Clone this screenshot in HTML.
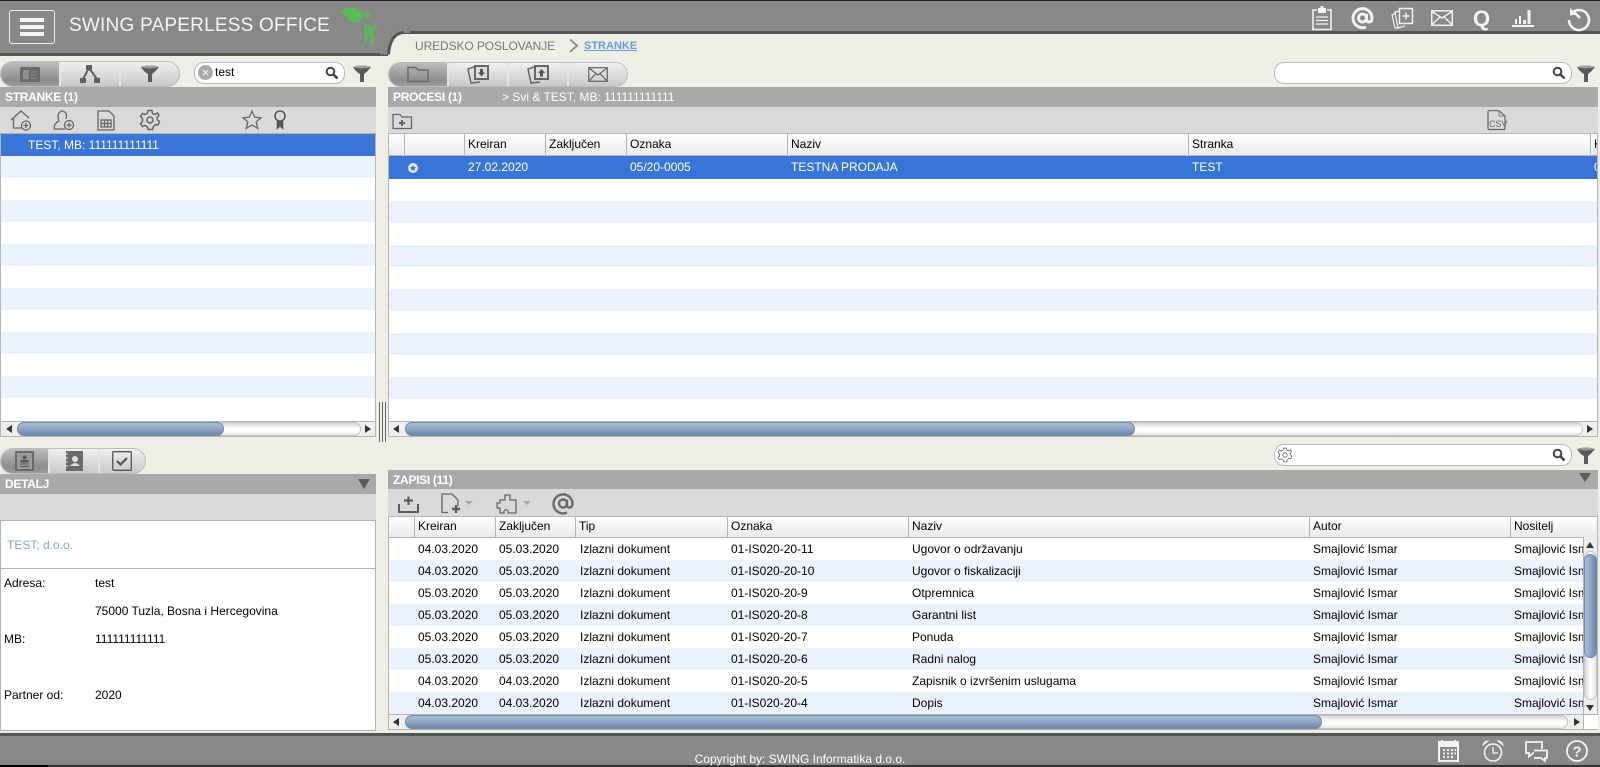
<!DOCTYPE html>
<html><head><meta charset="utf-8"><title>Swing Paperless Office</title>
<style>
*{box-sizing:border-box}
html,body{margin:0;padding:0;width:1600px;height:767px;overflow:hidden;background:#eeeee6;font:12px "Liberation Sans",Arial,sans-serif;color:#000}
.a{position:absolute}
svg{position:absolute;display:block;overflow:visible}
.ph{position:absolute;background:#a9a9a9;color:#fff;font-weight:bold;font-size:12px;line-height:20px;padding-left:5px;letter-spacing:-.3px}
.tb{position:absolute;background:#d9d9d9}
.box{position:absolute;background:#fff;border:1px solid #b4b4b4;overflow:hidden}
.r{position:absolute;left:0;right:0;height:22px;line-height:22px;white-space:nowrap}
.s{background:#3875d7;color:#fff}
.b{background:#ebf2fc}
.c{position:absolute;top:0;white-space:nowrap}
.hd{position:absolute;left:0;right:0;background:linear-gradient(#fff,#e9e9e9);border-bottom:1px solid #b4b4b4}
.h{position:absolute;top:0;bottom:0;border-right:1px solid #b4b4b4;padding-left:3px;line-height:21px;white-space:nowrap;overflow:hidden}
.tabs{position:absolute;height:25px;border:1px solid #bdbdbd;border-radius:13px;overflow:hidden;background:linear-gradient(#f0f0f0,#c8c8c8)}
.tab{position:absolute;top:0;bottom:0;border-right:2px solid #e4e4e4}
.tab.on{background:linear-gradient(#bcbcbc,#8c8c8c 75%,#9c9c9c)}
.sr{position:absolute;background:#fff;border:1px solid #b9b9b9;border-radius:10px;height:22px}
.hsb{position:absolute;height:16px;background:#eee;border:1px solid #b4b4b4}
.trk{position:absolute;top:0;height:14px;border-radius:7px;border:1px solid #c4c4c4;border-left:0;background:linear-gradient(#d4d4d4,#fff 45%,#fff 70%,#e4e4e4)}
.thm{position:absolute;top:0;height:14px;border-radius:7px;background:linear-gradient(#a9bcd4,#8ea5c4 50%,#6d86a9);border:1px solid #7489a8}
.la,.ra{position:absolute;top:3px;width:0;height:0;border-top:4px solid transparent;border-bottom:4px solid transparent}
.la{border-right:6px solid #333}.ra{border-left:6px solid #333}
</style></head><body>

<!-- top header -->
<div class="a" style="left:0;top:0;width:1600px;height:1px;background:#222"></div>
<div class="a" style="left:0;top:1px;width:1600px;height:30px;background:#888"></div>
<div class="a" style="left:0;top:31px;width:1600px;height:3px;background:#555"></div>
<div class="a" style="left:0;top:31px;width:388px;height:22px;background:#888"></div>
<div class="a" style="left:0;top:53px;width:388px;height:3px;background:#555"></div>
<svg style="left:380px;top:28px" width="30" height="30"><path d="M0 0H30V5H24Q11 5 9.500 26.500H0Z" fill="#888"/><path d="M24 4.500Q10 5 8.500 26.500" fill="none" stroke="#555" stroke-width="3"/></svg>

<div class="a" style="left:9px;top:10px;width:46px;height:34px;border:1px solid #f2f2f2;border-radius:3px"></div>
<div class="a" style="left:20px;top:18px;width:24px;height:4px;background:#f5f5f5"></div>
<div class="a" style="left:20px;top:25px;width:24px;height:4px;background:#f5f5f5"></div>
<div class="a" style="left:20px;top:32px;width:24px;height:4px;background:#f5f5f5"></div>
<div class="a" style="left:69px;top:14px;font-size:19px;letter-spacing:.22px;line-height:24px;color:#f4f4f4;white-space:nowrap">SWING PAPERLESS OFFICE</div>
<svg style="left:330px;top:0" width="70" height="60" viewBox="0 0 210 180" fill="#5cb85c"><path d="M33 32C55 15 85 22 103 42C100 60 85 70 70 68C50 62 42 45 33 32Z"/><circle cx="113" cy="45" r="9"/><path d="M98 62C108 75 118 80 125 80L148 73C140 82 132 88 128 92C134 110 136 128 124 141C124 125 120 112 114 102C112 120 106 135 95 146C105 125 110 95 98 62Z"/></svg>

<!-- top right icons -->
<svg style="left:1310px;top:6px" width="24" height="25" fill="none" stroke="#f2f2f2"><path d="M7 4H3V23.500H21V4H17" stroke-width="1.600"/><rect x="8" y="2" width="8" height="5" fill="#f2f2f2" stroke="none"/><rect x="10.500" y="0" width="3" height="3" fill="#f2f2f2" stroke="none"/><path d="M6 11H18M6 14.500H18M6 18H18" stroke-width="1.200"/></svg>
<svg style="left:1351px;top:7px" width="23" height="23" fill="none" stroke="#f2f2f2" stroke-width="3"><circle cx="11.500" cy="11" r="4"/><path d="M15.500 7V12.500Q15.500 15 18 15Q21 15 21 11A9.500 9.500 0 1 0 15 20"/></svg>
<svg style="left:1390px;top:7px" width="24" height="23" fill="none" stroke="#f2f2f2"><rect x="9.500" y="1.500" width="13" height="15" stroke-width="1.500"/><path d="M16 5.500V12.500M12.500 9H19.500" stroke-width="1.500"/><path d="M9 4L5 5L8 21L15 19M6 6L2 8L5 21L8 21" stroke-width="1.200"/></svg>
<svg style="left:1431px;top:10px" width="22" height="16" fill="none" stroke="#f2f2f2" stroke-width="1.500"><rect x=".8" y=".8" width="20.500" height="14.500"/><path d="M1 1.500L11 8L21 1.500M1 14.500L9 7M21 14.500L13 7"/></svg>
<div class="a" style="left:1473px;top:6px;font-size:22px;font-weight:bold;line-height:25px;color:#f4f4f4">Q</div>
<svg style="left:1512px;top:9px" width="22" height="19" fill="#f2f2f2"><rect x="0" y="16" width="22" height="2"/><rect x="3" y="10" width="2" height="5"/><rect x="7" y="7" width="2" height="8"/><rect x="11" y="11" width="3" height="4"/><rect x="15.500" y="1" width="3" height="14"/></svg>
<svg style="left:1567px;top:7px" width="24" height="24" fill="none" stroke="#f2f2f2" stroke-width="2.600"><path d="M4 7A10 10 0 1 1 2 13"/><path d="M3 1L3 8.500L10 7.500" stroke-width="0" fill="#f2f2f2"/><path d="M6 4L13 11"/></svg>

<!-- breadcrumb -->
<div class="a" style="left:415px;top:39px;line-height:15px;color:#777;letter-spacing:-.1px;white-space:nowrap">UREDSKO POSLOVANJE</div>
<svg style="left:568px;top:38px" width="12" height="16" fill="none" stroke="#8a8a8a" stroke-width="1.800"><path d="M2 1.500L9 7.500L2 14"/></svg>
<div class="a" style="left:584px;top:39px;line-height:15px;font-size:11px;color:#6c9ad8;font-weight:bold;text-decoration:underline;white-space:nowrap">STRANKE</div>

<!-- left tabs -->
<div class="tabs" style="left:0;top:61px;width:180px;height:26px">
 <div class="tab on" style="left:0;width:60px"></div><div class="tab" style="left:60px;width:60px"></div>
</div>
<svg style="left:20px;top:67px" width="20" height="15"><rect width="20" height="15" rx="2" fill="#6a6a6a"/><rect x="3" y="3" width="6" height="9" fill="#8e8e8e"/><path d="M11 5H17M11 8H17M11 11H17" stroke="#8e8e8e"/></svg>
<svg style="left:80px;top:65px" width="20" height="19" fill="#5f5f5f"><rect x="6" y="0" width="6" height="5"/><rect x="0" y="13" width="6" height="5"/><rect x="14" y="13" width="6" height="5"/><path d="M9 3L3 14M9 3L17 14" stroke="#5f5f5f" stroke-width="2" fill="none"/></svg>
<svg style="left:141px;top:65px" width="18" height="18" fill="#5a5a5a"><path d="M0 2Q9 -1 18 2Q14 7 11 9V17H7V9Q3 7 0 2Z"/><path d="M0 2Q9 -1 18 2Q9 5 0 2Z" fill="#a0a0a0"/></svg>

<div class="sr" style="left:194px;top:62px;width:151px"></div>
<div class="a" style="left:198px;top:65px;width:15px;height:15px;border-radius:50%;background:#aaa;color:#fff;text-align:center;font-size:13px;line-height:15px">×</div>
<div class="a" style="left:215px;top:65px;font-size:12px;line-height:15px">test</div>
<svg style="left:325px;top:66px" width="14" height="14" fill="none" stroke="#444"><circle cx="5.500" cy="5.500" r="3.800" stroke-width="2"/><path d="M8.500 8.500L12.500 12.500" stroke-width="2.600"/></svg>
<svg style="left:353px;top:65px" width="18" height="18" fill="#5a5a5a"><path d="M0 2Q9 -1 18 2Q14 7 11 9V17H7V9Q3 7 0 2Z"/><path d="M0 2Q9 -1 18 2Q9 5 0 2Z" fill="#a0a0a0"/></svg>

<!-- stranke -->
<div class="ph" style="left:0;top:87px;width:376px">STRANKE (1)</div>
<div class="tb" style="left:0;top:107px;width:376px;height:26px"></div>
<svg style="left:10px;top:110px" width="22" height="21" fill="none" stroke="#666" stroke-width="1.300"><path d="M1 10L11 1L19 8M3.500 8.500V18H12"/><circle cx="16" cy="15.500" r="4.500"/><path d="M13.500 15.500H18.500M16 13V18"/></svg>
<svg style="left:53px;top:110px" width="22" height="21" fill="none" stroke="#666" stroke-width="1.300"><path d="M1 19Q1 13 6 11Q3 3 9 1Q15 2 13 9"/><path d="M1 19H12"/><circle cx="16" cy="15" r="4.500"/><path d="M13.500 15H18.500M16 12.500V17.500"/></svg>
<svg style="left:97px;top:110px" width="18" height="21" fill="none" stroke="#666" stroke-width="1.300"><path d="M1 1H12L17 6V20H1Z"/><rect x="4" y="10" width="10" height="7"/><path d="M7.500 10V17M10.500 10V17M4 13.500H14"/></svg>
<svg style="left:139px;top:109px" width="22" height="22" fill="none" stroke="#666" stroke-width="1.500"><circle cx="11" cy="11" r="3"/><path d="M9 1.500H13L13.500 4.500L16 5.500L18.500 3.800L20 6.500L18 8.500L18.500 11L20.500 12.500L19 16L16.500 15.500L14.500 17.500L13.500 20.500H9L8.500 18L6 16.500L3.500 17.500L1.500 14.500L3.500 12.500V9.500L1.500 7.500L3.500 4.500L6 5.500L8.500 4Z"/></svg>
<svg style="left:242px;top:110px" width="20" height="19" fill="none" stroke="#666" stroke-width="1.300"><path d="M10 1L12.700 7.200L19 7.800L14.200 12L15.700 18.300L10 15L4.300 18.300L5.800 12L1 7.800L7.300 7.200Z"/></svg>
<svg style="left:273px;top:110px" width="14" height="19" fill="none" stroke="#555" stroke-width="1.600"><circle cx="7" cy="6" r="5"/><path d="M4.500 11V18L7 15.500L9.500 18V11" fill="#555"/></svg>

<div class="box" style="left:0;top:133px;width:376px;height:304px">
 <div class="r s" style="top:0;padding-left:27px">TEST, MB: 111111111111</div>
 <div class="r b" style="top:22px"></div><div class="r b" style="top:66px"></div><div class="r b" style="top:110px"></div><div class="r b" style="top:154px"></div><div class="r b" style="top:198px"></div><div class="r b" style="top:242px"></div>
</div>
<div class="hsb" style="left:0;top:421px;width:376px">
 <div class="la" style="left:5px"></div><div class="trk" style="left:17px;width:343px"></div><div class="thm" style="left:16px;width:207px"></div><div class="ra" style="left:364px"></div>
</div>

<!-- splitter -->
<div class="a" style="left:379px;top:402px;width:1px;height:40px;background:#666"></div>
<div class="a" style="left:382px;top:402px;width:1px;height:40px;background:#666"></div>
<div class="a" style="left:385px;top:402px;width:1px;height:40px;background:#666"></div>

<!-- right top tabs -->
<div class="tabs" style="left:388px;top:62px;width:240px">
 <div class="tab on" style="left:0;width:60px"></div><div class="tab" style="left:60px;width:60px"></div><div class="tab" style="left:120px;width:60px"></div>
</div>
<svg style="left:407px;top:66px" width="22" height="17" fill="none" stroke="#6a6a6a" stroke-width="1.500"><path d="M1 15.500V1.500H9L11 4H21V15.500Z"/></svg>
<svg style="left:467px;top:65px" width="24" height="19"><path d="M7 2L1 4L4 18L13 17" fill="none" stroke="#666" stroke-width="1.500"/><rect x="7" y="0" width="15" height="15" fill="#666"/><rect x="9" y="2" width="11" height="11" fill="#ddd"/><path d="M13 4H16V7.500H18L14.500 11.500L11 7.500H13Z" fill="#555"/></svg>
<svg style="left:527px;top:65px" width="24" height="19"><path d="M7 2L1 4L4 18L13 17" fill="none" stroke="#666" stroke-width="1.500"/><rect x="7" y="0" width="15" height="15" fill="#666"/><rect x="9" y="2" width="11" height="11" fill="#ddd"/><path d="M13 11.500H16V8H18L14.500 4L11 8H13Z" fill="#555"/></svg>
<svg style="left:588px;top:67px" width="20" height="15" fill="none" stroke="#6a6a6a" stroke-width="1.300"><rect x=".7" y=".7" width="18.600" height="13.600"/><path d="M1 1L10 8L19 1M1 14L8 6.500M19 14L12 6.500"/></svg>

<div class="sr" style="left:1274px;top:62px;width:298px"></div>
<svg style="left:1552px;top:66px" width="14" height="14" fill="none" stroke="#444"><circle cx="5.500" cy="5.500" r="3.800" stroke-width="2"/><path d="M8.500 8.500L12.500 12.500" stroke-width="2.600"/></svg>
<svg style="left:1577px;top:65px" width="18" height="18" fill="#5a5a5a"><path d="M0 2Q9 -1 18 2Q14 7 11 9V17H7V9Q3 7 0 2Z"/><path d="M0 2Q9 -1 18 2Q9 5 0 2Z" fill="#a0a0a0"/></svg>

<!-- procesi -->
<div class="ph" style="left:388px;top:87px;width:1210px">PROCESI (1)</div>
<div class="a" style="left:502px;top:87px;line-height:20px;color:#fff;white-space:nowrap">&gt; Svi &amp; TEST, MB: 111111111111</div>
<div class="tb" style="left:388px;top:107px;width:1210px;height:26px"></div>
<svg style="left:392px;top:113px" width="21" height="17" fill="none" stroke="#666" stroke-width="1.300"><path d="M1 15.500V1.500H8L10 4H19.500V15.500Z"/><path d="M10 7V13M7 10H13" stroke-width="2"/></svg>
<svg style="left:1487px;top:110px" width="20" height="21" fill="none" stroke="#666" stroke-width="1.200"><path d="M2 19.500Q1 19.500 1 18V2Q1 .7 2 .7H12L18 6V18Q18 19.500 17 19.500Z"/><path d="M12 1V6H18" stroke-width=".8"/><text x="2" y="17" font-family="Liberation Sans" font-size="9" fill="#666" stroke="none">CSV</text></svg>

<div class="box" style="left:388px;top:133px;width:1210px;height:288px;border-bottom:0">
 <div class="hd" style="top:0;height:22px">
  <div class="h" style="left:0;width:16px"></div><div class="h" style="left:16px;width:60px"></div>
  <div class="h" style="left:76px;width:81px">Kreiran</div><div class="h" style="left:157px;width:81px">Zaključen</div><div class="h" style="left:238px;width:161px">Oznaka</div><div class="h" style="left:399px;width:401px">Naziv</div><div class="h" style="left:800px;width:402px">Stranka</div><div class="h" style="left:1202px;width:7px;border:0">K</div>
 </div>
 <div class="r s" style="top:22px;height:23px"><svg style="left:19px;top:7px" width="10" height="10"><circle cx="5" cy="5" r="5" fill="#dfe8f7"/><path d="M5 2L5.900 4.100L8 4.300L6.400 5.700L6.900 7.800L5 6.700L3.100 7.800L3.600 5.700L2 4.300L4.100 4.100Z" fill="#3875d7"/></svg>
  <div class="c" style="left:79px">27.02.2020</div><div class="c" style="left:241px">05/20-0005</div><div class="c" style="left:402px">TESTNA PRODAJA</div><div class="c" style="left:803px">TEST</div><div class="c" style="left:1205px">0</div></div>
 <div class="r b" style="top:67px"></div><div class="r b" style="top:111px"></div><div class="r b" style="top:155px"></div><div class="r b" style="top:199px"></div><div class="r b" style="top:243px"></div>
</div>
<div class="hsb" style="left:388px;top:421px;width:1210px">
 <div class="la" style="left:4px"></div><div class="trk" style="left:17px;width:1177px"></div><div class="thm" style="left:16px;width:730px"></div><div class="ra" style="left:1198px"></div>
</div>

<!-- detail tabs -->
<div class="tabs" style="left:0;top:448px;width:146px;height:26px">
 <div class="tab on" style="left:0;width:49px"></div><div class="tab" style="left:49px;width:50px"></div>
</div>
<svg style="left:15px;top:451px" width="19" height="20"><rect width="19" height="20" rx="1" fill="#6a6a6a"/><rect x="2" y="2" width="15" height="16" fill="#9a9a9a"/><circle cx="9.500" cy="6.500" r="2" fill="#555"/><path d="M6 11V9.500H13V11ZM5 13H14M5 15.500H14" fill="#555" stroke="#555"/></svg>
<svg style="left:65px;top:451px" width="18" height="20"><rect x="1" y="0" width="17" height="20" fill="#6a6a6a"/><path d="M0 3H3M0 7H3M0 11H3M0 15H3" stroke="#ddd"/><circle cx="10" cy="8" r="3" fill="#ddd"/><path d="M5 15Q10 9 15 15Z" fill="#ddd"/></svg>
<svg style="left:112px;top:451px" width="20" height="20" fill="none" stroke="#555"><rect x=".7" y=".7" width="18.600" height="18.600" rx="1" stroke-width="1.300"/><path d="M5 10L8.500 13.500L15 7" stroke-width="2.200"/></svg>

<!-- detalj -->
<div class="ph" style="left:0;top:474px;width:376px">DETALJ</div>
<div class="a" style="left:358px;top:479px;width:0;height:0;border-left:6.500px solid transparent;border-right:6.500px solid transparent;border-top:10px solid #5c5c5c"></div>
<div class="tb" style="left:0;top:494px;width:376px;height:26px"></div>
<div class="box" style="left:0;top:520px;width:376px;height:211px"></div>
<div class="a" style="left:1px;top:568px;width:374px;height:1px;background:#b4b4b4"></div>
<div class="a" style="left:7px;top:537px;line-height:16px;color:#8aa2c8">TEST; d.o.o.</div>
<div class="a" style="left:4px;top:575px;line-height:16px">Adresa:</div><div class="a" style="left:95px;top:575px;line-height:16px">test</div>
<div class="a" style="left:95px;top:603px;line-height:16px;white-space:nowrap">75000 Tuzla, Bosna i Hercegovina</div>
<div class="a" style="left:4px;top:631px;line-height:16px">MB:</div><div class="a" style="left:95px;top:631px;line-height:16px">111111111111</div>
<div class="a" style="left:4px;top:687px;line-height:16px">Partner od:</div><div class="a" style="left:95px;top:687px;line-height:16px">2020</div>

<!-- zapisi search -->
<div class="sr" style="left:1274px;top:444px;width:298px"></div>
<svg style="left:1277px;top:447px" width="16" height="16" fill="none" stroke="#666" stroke-width="1.100" viewBox="0 0 22 22"><circle cx="11" cy="11" r="3"/><path d="M9 1.500H13L13.500 4.500L16 5.500L18.500 3.800L20 6.500L18 8.500L18.500 11L20.500 12.500L19 16L16.500 15.500L14.500 17.500L13.500 20.500H9L8.500 18L6 16.500L3.500 17.500L1.500 14.500L3.500 12.500V9.500L1.500 7.500L3.500 4.500L6 5.500L8.500 4Z"/></svg>
<svg style="left:1552px;top:448px" width="14" height="14" fill="none" stroke="#444"><circle cx="5.500" cy="5.500" r="3.800" stroke-width="2"/><path d="M8.500 8.500L12.500 12.500" stroke-width="2.600"/></svg>
<svg style="left:1577px;top:447px" width="18" height="18" fill="#5a5a5a"><path d="M0 2Q9 -1 18 2Q14 7 11 9V17H7V9Q3 7 0 2Z"/><path d="M0 2Q9 -1 18 2Q9 5 0 2Z" fill="#a0a0a0"/></svg>

<!-- zapisi -->
<div class="ph" style="left:388px;top:470px;width:1210px;height:19px;line-height:21px;padding-left:5px;overflow:hidden">ZAPISI (11)</div>
<div class="a" style="left:1579px;top:473px;width:0;height:0;border-left:6px solid transparent;border-right:6px solid transparent;border-top:9px solid #5c5c5c"></div>
<div class="tb" style="left:388px;top:489px;width:1210px;height:27px"></div>
<svg style="left:398px;top:495px" width="21" height="19" fill="none" stroke="#5c5c5c" stroke-width="2"><path d="M1 9V17H20V9"/><path d="M10.500 1.500V10M6 5.500H15" stroke-width="2.200"/></svg>
<svg style="left:441px;top:493px" width="32" height="21"><path d="M7 19.500H1V1H11L17 7V13" fill="none" stroke="#666" stroke-width="1.300"/><path d="M15 12V20M11 16H19" stroke="#5c5c5c" stroke-width="2.400"/><path d="M24 8H32L28 12Z" fill="#aaa"/></svg>
<svg style="left:496px;top:493px" width="36" height="21" fill="none"><path d="M9 2H14V7H20V20H12V18Q10 15 8 18V20H4V15H1V10H4V7H9Z" stroke="#666" stroke-width="1.300"/><path d="M27 8H35L31 12Z" fill="#aaa"/></svg>
<svg style="left:552px;top:493px" width="22" height="22" fill="none" stroke="#6a6a6a" stroke-width="2.400"><circle cx="11" cy="10.500" r="4"/><path d="M15 6.500V12Q15 14.500 17.500 14.500Q20.500 14.500 20.500 10.500A9.500 9.500 0 1 0 15 19.500"/></svg>

<div class="box" style="left:388px;top:516px;width:1210px;height:199px;border-bottom:0">
 <div class="hd" style="top:0;height:21px">
  <div class="h" style="left:0;width:26px"></div>
  <div class="h" style="left:26px;width:81px;line-height:19px">Kreiran</div><div class="h" style="left:107px;width:80px;line-height:19px">Zaključen</div><div class="h" style="left:187px;width:152px;line-height:19px">Tip</div><div class="h" style="left:339px;width:181px;line-height:19px">Oznaka</div><div class="h" style="left:520px;width:401px;line-height:19px">Naziv</div><div class="h" style="left:921px;width:201px;line-height:19px">Autor</div><div class="h" style="left:1122px;width:87px;border:0;line-height:19px">Nositelj</div>
 </div>
 <div class="r" style="top:21px"><div class="c" style="left:29px">04.03.2020</div><div class="c" style="left:110px">05.03.2020</div><div class="c" style="left:191px">Izlazni dokument</div><div class="c" style="left:342px">01-IS020-20-11</div><div class="c" style="left:523px">Ugovor o održavanju</div><div class="c" style="left:924px">Smajlović Ismar</div><div class="c" style="left:1125px;width:69px;overflow:hidden">Smajlović Ismar</div></div>
 <div class="r b" style="top:43px"><div class="c" style="left:29px">04.03.2020</div><div class="c" style="left:110px">05.03.2020</div><div class="c" style="left:191px">Izlazni dokument</div><div class="c" style="left:342px">01-IS020-20-10</div><div class="c" style="left:523px">Ugovor o fiskalizaciji</div><div class="c" style="left:924px">Smajlović Ismar</div><div class="c" style="left:1125px;width:69px;overflow:hidden">Smajlović Ismar</div></div>
 <div class="r" style="top:65px"><div class="c" style="left:29px">05.03.2020</div><div class="c" style="left:110px">05.03.2020</div><div class="c" style="left:191px">Izlazni dokument</div><div class="c" style="left:342px">01-IS020-20-9</div><div class="c" style="left:523px">Otpremnica</div><div class="c" style="left:924px">Smajlović Ismar</div><div class="c" style="left:1125px;width:69px;overflow:hidden">Smajlović Ismar</div></div>
 <div class="r b" style="top:87px"><div class="c" style="left:29px">05.03.2020</div><div class="c" style="left:110px">05.03.2020</div><div class="c" style="left:191px">Izlazni dokument</div><div class="c" style="left:342px">01-IS020-20-8</div><div class="c" style="left:523px">Garantni list</div><div class="c" style="left:924px">Smajlović Ismar</div><div class="c" style="left:1125px;width:69px;overflow:hidden">Smajlović Ismar</div></div>
 <div class="r" style="top:109px"><div class="c" style="left:29px">05.03.2020</div><div class="c" style="left:110px">05.03.2020</div><div class="c" style="left:191px">Izlazni dokument</div><div class="c" style="left:342px">01-IS020-20-7</div><div class="c" style="left:523px">Ponuda</div><div class="c" style="left:924px">Smajlović Ismar</div><div class="c" style="left:1125px;width:69px;overflow:hidden">Smajlović Ismar</div></div>
 <div class="r b" style="top:131px"><div class="c" style="left:29px">05.03.2020</div><div class="c" style="left:110px">05.03.2020</div><div class="c" style="left:191px">Izlazni dokument</div><div class="c" style="left:342px">01-IS020-20-6</div><div class="c" style="left:523px">Radni nalog</div><div class="c" style="left:924px">Smajlović Ismar</div><div class="c" style="left:1125px;width:69px;overflow:hidden">Smajlović Ismar</div></div>
 <div class="r" style="top:153px"><div class="c" style="left:29px">04.03.2020</div><div class="c" style="left:110px">04.03.2020</div><div class="c" style="left:191px">Izlazni dokument</div><div class="c" style="left:342px">01-IS020-20-5</div><div class="c" style="left:523px">Zapisnik o izvršenim uslugama</div><div class="c" style="left:924px">Smajlović Ismar</div><div class="c" style="left:1125px;width:69px;overflow:hidden">Smajlović Ismar</div></div>
 <div class="r b" style="top:175px"><div class="c" style="left:29px">04.03.2020</div><div class="c" style="left:110px">04.03.2020</div><div class="c" style="left:191px">Izlazni dokument</div><div class="c" style="left:342px">01-IS020-20-4</div><div class="c" style="left:523px">Dopis</div><div class="c" style="left:924px">Smajlović Ismar</div><div class="c" style="left:1125px;width:69px;overflow:hidden">Smajlović Ismar</div></div>
</div>
<!-- v scrollbar -->
<div class="a" style="left:1583px;top:537px;width:15px;height:178px;background:#eee;border:1px solid #b4b4b4;border-top:0;border-right:1px solid #b4b4b4"></div>
<div class="a" style="left:1584px;top:551px;width:13px;height:149px;border-radius:7px;background:linear-gradient(90deg,#d8d8d8,#fff 50%,#e4e4e4);border:1px solid #c4c4c4"></div>
<div class="a" style="left:1584px;top:554px;width:13px;height:104px;border-radius:7px;background:linear-gradient(90deg,#a9bcd4,#8ea5c4 50%,#6d86a9);border:1px solid #7489a8"></div>
<div class="a" style="left:1586px;top:542px;width:0;height:0;border-left:4px solid transparent;border-right:4px solid transparent;border-bottom:6px solid #333"></div>
<div class="a" style="left:1586px;top:705px;width:0;height:0;border-left:4px solid transparent;border-right:4px solid transparent;border-top:6px solid #333"></div>

<div class="hsb" style="left:388px;top:714px;width:1210px">
 <div class="la" style="left:4px"></div><div class="trk" style="left:17px;width:1162px"></div><div class="thm" style="left:16px;width:917px"></div><div class="ra" style="left:1185px"></div>
 <div class="a" style="left:1194px;top:0;width:15px;height:14px;background:#fff;border-left:1px solid #b4b4b4"></div>
</div>

<!-- footer -->
<div class="a" style="left:0;top:733px;width:1600px;height:3px;background:#555"></div>
<div class="a" style="left:0;top:736px;width:1600px;height:29px;background:#888"></div>
<div class="a" style="left:0;top:765px;width:1600px;height:2px;background:#333"></div>
<div class="a" style="left:0;top:765px;width:48px;height:2px;background:#000"></div>
<div class="a" style="left:0;top:751px;width:1600px;text-align:center;color:#fff;line-height:16px">Copyright by: SWING Informatika d.o.o.</div>
<svg style="left:1438px;top:740px" width="21" height="22" fill="#f2f2f2"><path d="M0 1H3V0H5V1H16V0H18V1H21V22H0ZM2 7V20H19V7Z" fill-rule="evenodd"/><path d="M5 9h2v2H5zM9 9h2v2H9zM13 9h2v2h-2zM16.500 9h1.500v2h-1.500zM5 12.500h2v2H5zM9 12.500h2v2H9zM13 12.500h2v2h-2zM16.500 12.500h1.500v2h-1.500zM5 16h2v2H5zM9 16h2v2H9zM13 16h2v2h-2z"/></svg>
<svg style="left:1482px;top:740px" width="22" height="22" fill="none" stroke="#f2f2f2"><circle cx="11" cy="12.500" r="8.500" stroke-width="1.600"/><path d="M11 7V13H16" stroke-width="1.300"/><path d="M1 5Q2 1 6 1ZM21 5Q20 1 16 1Z" fill="#f2f2f2" stroke-width="1"/></svg>
<svg style="left:1525px;top:741px" width="23" height="21" fill="none" stroke="#f2f2f2" stroke-width="1.800"><path d="M15 12H8L4 15.500V12H1V1H17V8"/><path d="M9 9.500H22V17H20V20L16 17H9" fill="#888"/></svg>
<svg style="left:1566px;top:740px" width="22" height="22" fill="none" stroke="#f2f2f2" stroke-width="1.800"><circle cx="11" cy="11" r="10"/><text x="6.500" y="16.500" font-family="Liberation Sans" font-size="15" font-weight="bold" fill="#f2f2f2" stroke="none">?</text></svg>
</body></html>
